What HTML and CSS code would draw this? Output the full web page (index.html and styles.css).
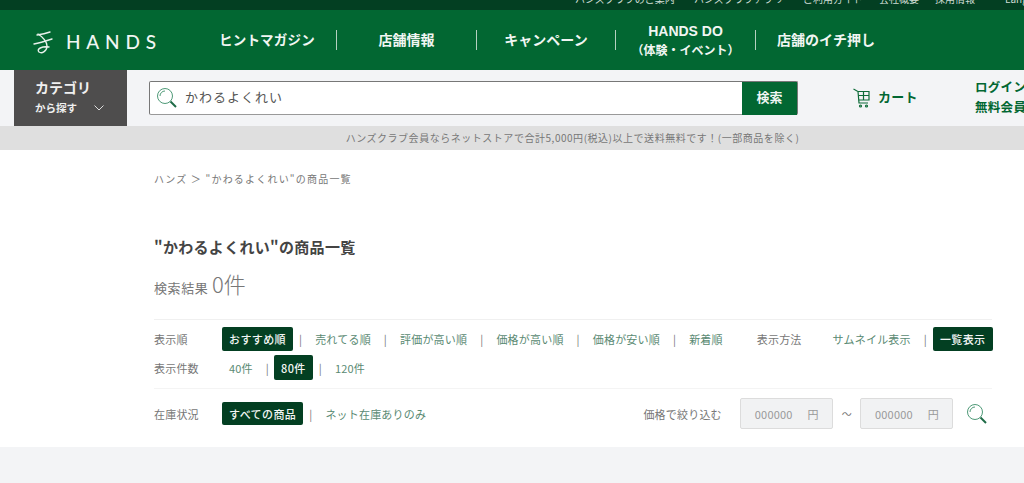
FILE: index.html
```html
<!DOCTYPE html>
<html lang="ja">
<head>
<meta charset="utf-8">
<title>HANDS</title>
<link rel="stylesheet" href="styles.css">
</head>
<body>
<div class="topbar">
  <span class="t1">ハンズクラブのご案内</span>
  <span class="t2">ハンズクラブアプリ</span>
  <span class="t3">ご利用ガイド</span>
  <span class="t4">会社概要</span>
  <span class="t5">採用情報</span>
  <span class="t6">Language</span>
</div>
<header class="mainnav">
  <div class="logo">
    <svg class="logo-mark" width="20" height="26" viewBox="0 0 20 26" fill="none" stroke="#e8f1ec" stroke-width="1.4" stroke-linecap="round">
      <path d="M4 6 C8 5.500 13 4.500 17 3"/>
      <path d="M1 15 C7 14 13 12 19 10"/>
      <path d="M5 5 C10 8 14 13 14 17 C14 22 9 25 6 23 C3 20 9 17 16 18"/>
    </svg>
    <span class="logo-text">HANDS</span>
  </div>
  <nav class="navlinks">
    <a class="nav-a w1">ヒントマガジン</a>
    <a class="nav-a w2">店舗情報</a>
    <a class="nav-a w3">キャンペーン</a>
    <a class="nav-a w4"><span class="do">HANDS DO</span><span class="do-sub">（体験・イベント）</span></a>
    <a class="nav-a w5">店舗のイチ押し</a>
  </nav>
</header>
<div class="searchrow">
  <div class="cat">
    <div class="cat-1">カテゴリ</div>
    <div class="cat-2">から探す
      <svg class="chev" width="10" height="6" viewBox="0 0 10 6" fill="none" stroke="#ddd" stroke-width="1"><path d="M0.500 0.500 L5 5 L9.500 0.500"/></svg>
    </div>
  </div>
  <div class="searchbox">
    <svg class="s-ic" width="22" height="22" viewBox="0 0 22 22" fill="none" stroke="#4f9a78">
      <circle cx="9" cy="9" r="7.500" stroke-width="1"/>
      <path d="M9 4 A5 5 0 0 0 4 9" stroke-width="1"/>
      <path d="M14.500 14.500 L20 20" stroke="#1f6b47" stroke-width="2"/>
    </svg>
    <span class="s-text">かわるよくれい</span>
    <span class="s-btn">検索</span>
  </div>
  <div class="cart">
    <svg class="cart-ic" width="19" height="20" viewBox="0 0 19 20" fill="none" stroke="#0d6b38" stroke-width="1.200">
      <path d="M0.500 1 L5 3.500 L6 15 H15"/>
      <path d="M5 3.500 H16 V12 H5.800"/>
      <path d="M5.500 7.500 H16 M10.500 3.500 V12"/>
      <circle cx="7.500" cy="18" r="1"/>
      <circle cx="13.500" cy="18" r="1"/>
    </svg>
    <span class="cart-text">カート</span>
  </div>
  <div class="login">
    <div>ログイン</div>
    <div>無料会員登録</div>
  </div>
</div>
<div class="notice">ハンズクラブ会員ならネットストアで合計5,000円(税込)以上で送料無料です！(一部商品を除く)</div>
<main class="content">
  <div class="crumb">ハンズ ＞ "かわるよくれい"の商品一覧</div>
  <h1 class="title">"かわるよくれい"の商品一覧</h1>
  <div class="result">検索結果 <span class="count">0件</span></div>
  <div class="filter">
    <div class="frow r1">
      <span class="lab">表示順</span>
      <span class="on">おすすめ順</span><i class="near-l">|</i>
      <a>売れてる順</a><i>|</i>
      <a>評価が高い順</a><i>|</i>
      <a>価格が高い順</a><i>|</i>
      <a>価格が安い順</a><i>|</i>
      <a>新着順</a>
      <span class="lab2">表示方法</span>
      <a>サムネイル表示</a><i class="near-r">|</i>
      <span class="on">一覧表示</span>
    </div>
    <div class="frow r2">
      <span class="lab">表示件数</span>
      <a class="first">40件</a><i class="near-r">|</i>
      <span class="on">80件</span><i class="near-l">|</i>
      <a>120件</a>
    </div>
    <div class="frow r3">
      <span class="lab">在庫状況</span>
      <span class="on">すべての商品</span><i class="near-l">|</i>
      <a>ネット在庫ありのみ</a>
      <span class="price-lab">価格で絞り込む</span>
      <span class="pinput"><b>000000</b><b>円</b></span>
      <span class="tilde">～</span>
      <span class="pinput"><b>000000</b><b>円</b></span>
      <svg class="p-ic" width="22" height="22" viewBox="0 0 22 22" fill="none" stroke="#4f9a78">
        <circle cx="9" cy="9" r="7.500" stroke-width="1"/>
        <path d="M9 4 A5 5 0 0 0 4 9" stroke-width="1"/>
        <path d="M14.500 14.500 L20 20" stroke="#1f6b47" stroke-width="2"/>
      </svg>
    </div>
  </div>
</main>
<div class="band"></div>
</body>
</html>
```
FILE: styles.css
```css
* { box-sizing: border-box; }
html, body { margin: 0; padding: 0; }
body {
  width: 1024px;
  height: 483px;
  overflow: hidden;
  background: #fff;
  font-family: "Noto Sans CJK JP", "Noto Sans", sans-serif;
  color: #444;
}
.topbar {
  height: 10px;
  background: #033f22;
  overflow: hidden;
  display: flex;
  color: #cfdcd4;
  font-size: 10px;
  line-height: 10px;
  padding-left: 575px;
  white-space: nowrap;
}
.topbar span { position: relative; top: -6px; flex: none; }
.t1 { width: 119px; }
.t2 { width: 109px; }
.t3 { width: 76px; }
.t4 { width: 56px; }
.t5 { width: 70px; }
.mainnav {
  height: 60px;
  background: #026732;
  display: flex;
  align-items: center;
  color: #f1f6f3;
}
.logo { display: flex; align-items: center; width: 219px; padding: 3px 0 0 33px; flex: none; }
.logo-text {
  font-family: "Lato", sans-serif;
  font-size: 19px;
  font-weight: 500;
  letter-spacing: 5.800px;
  margin-left: 13px;
}
.navlinks { display: flex; align-items: center; }
.nav-a {
  display: flex;
  flex-direction: column;
  align-items: center;
  justify-content: center;
  font-size: 14px;
  font-weight: 700;
  line-height: 18px;
  height: 20px;
  padding-bottom: 3px;
  white-space: nowrap;
  border-right: 1px solid #b5d0c0;
}
.w1 { width: 118px; align-items: flex-start; font-size: 13.500px; letter-spacing: .2px; }
.w2 { width: 140px; }
.w3 { width: 139px; }
.w4 { width: 140px; padding-bottom: 0; }
.w5 { width: 140px; border-right: 0; }
.do { font-family: "Liberation Sans", sans-serif; font-size: 14px; }
.do-sub { font-size: 12px; margin-top: 1px; }
.searchrow {
  height: 56px;
  background: #f3f4f6;
  display: flex;
  align-items: flex-start;
  overflow: hidden;
}
.cat {
  flex: none;
  width: 113px;
  height: 56px;
  margin-left: 14px;
  background: #4e4d4d;
  color: #f0f0f0;
  font-weight: 700;
  padding: 8px 0 0 21px;
}
.cat-1 { font-size: 14px; line-height: 18px; }
.cat-2 { font-size: 10.500px; line-height: 18px; margin-top: 3px; display: flex; align-items: center; }
.chev { margin-left: 17px; }
.searchbox {
  flex: none;
  width: 649px;
  height: 34px;
  margin: 11px 0 0 22px;
  background: #fff;
  border: 1px solid #777;
  border-bottom-color: #999;
  border-radius: 2px;
  display: flex;
  align-items: center;
  padding-left: 6px;
}
.s-text { font-size: 13px; letter-spacing: 1px; color: #555; margin-left: 7px; flex: 1; padding-bottom: 4px; }
.s-btn {
  width: 55px;
  height: 33px;
  background: #026732;
  color: #f1f6f3;
  font-size: 13px;
  font-weight: 700;
  display: flex;
  align-items: center;
  justify-content: center;
  padding-bottom: 4px;
}
.cart {
  flex: none;
  display: flex;
  align-items: center;
  margin: 17px 0 0 55px;
  color: #026732;
  font-size: 13px;
  font-weight: 700;
  letter-spacing: .2px;
  width: 122px;
  gap: 6px;
}
.cart-text { padding-bottom: 3px; }
.login {
  flex: none;
  font-size: 12.500px;
  font-weight: 700;
  line-height: 20px;
  margin-top: 7px;
  color: #026732;
  letter-spacing: .3px;
  white-space: nowrap;
}
.notice {
  height: 24px;
  background: #dfdfdf;
  color: #777;
  font-size: 10px;
  line-height: 24px;
  letter-spacing: .53px;
  text-align: center;
  padding-left: 121px;
}
.content { height: 297px; padding: 0 32px 0 154px; }
.crumb { font-size: 10px; letter-spacing: 1.200px; color: #777; padding-top: 21px; line-height: 16px; }
.title { margin: 50px 0 0; font-size: 15px; font-weight: 700; line-height: 20px; color: #444; letter-spacing: .3px; }
.result { margin-top: 12px; font-size: 13px; line-height: 28px; color: #777; letter-spacing: .6px; }
.count { font-size: 22px; font-weight: 300; letter-spacing: 0; line-height: 28px; }
.filter { margin-top: 17px; border-top: 1px solid #f0f0f0; }
.frow { display: flex; align-items: center; font-size: 11px; letter-spacing: .2px; color: #777; white-space: nowrap; }
.frow a { color: #5a8a73; }
.frow i { font-style: normal; color: #777; margin: 0 13px 0 13px; }
.frow .near-l { margin-left: 6px; }
.frow .near-r { margin-right: 5px; }
.r1 { height: 24px; margin-top: 7px; }
.r1 .near-r { margin-right: 6px; }
.r2 { height: 25px; margin-top: 4px; }
.r3 { margin-top: 8px; border-top: 1px solid #f4f4f4; padding-top: 9px; }
.first { margin-left: 7px; }
.lab { width: 68px; flex: none; }
.lab2 { margin: 0 31px 0 34px; }
.on {
  background: #033f22;
  color: #f3f6f4;
  border-radius: 2px;
  padding: 0 7px;
  height: 100%;
  display: flex;
  align-items: center;
  font-weight: 500;
  letter-spacing: .4px;
}
.r3 .on { height: 23px; }
.price-lab { margin-left: auto; margin-right: 18px; letter-spacing: .2px; }
.pinput {
  width: 93px;
  height: 31px;
  background: #f1f2f3;
  border: 1px solid #dcdcdc;
  border-radius: 2px;
  display: flex;
  justify-content: space-between;
  align-items: center;
  padding: 0 13px 0 14px;
  color: #999;
  font-size: 11px;
}
.pinput b { font-weight: 400; }
.tilde { margin: 0 8px 0 9px; color: #777; font-size: 10px; }
.p-ic { margin: 0 4px 0 13px; }
.band { height: 36px; background: #f3f4f6; }
```
